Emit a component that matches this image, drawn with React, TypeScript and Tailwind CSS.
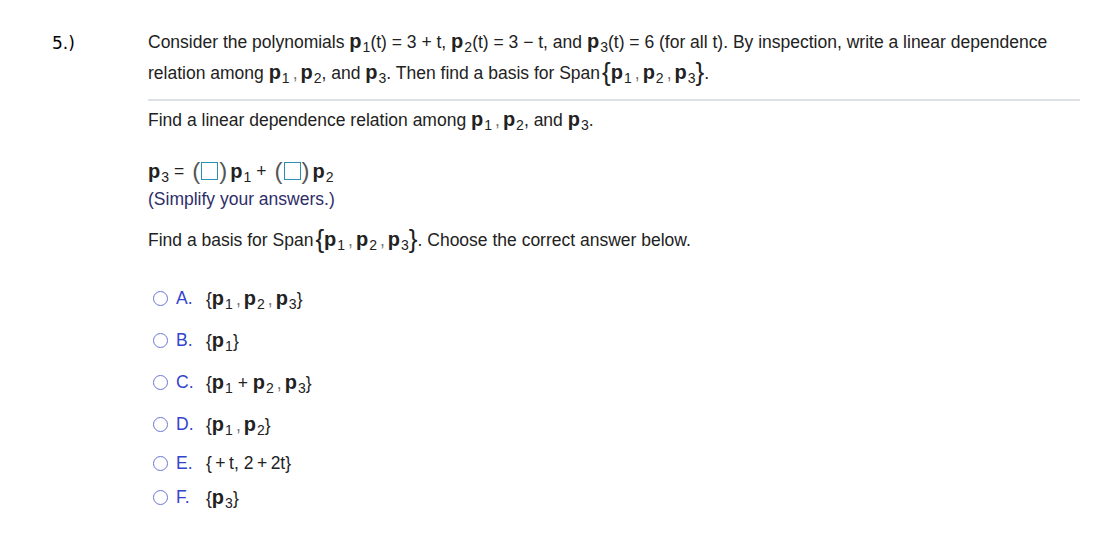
import React from "react";

const P: React.FC<{ n?: number }> = ({ n }) => (
  <span className="whitespace-nowrap">
    <b className="font-bold text-[20px]">p</b>
    {n !== undefined && <sub className="text-[14px] font-normal ml-[1px]">{n}</sub>}
  </span>
);

const Sep = () => <span className="text-[#777] mx-[3px]">,</span>;

const BigSet: React.FC<{ children: React.ReactNode }> = ({ children }) => (
  <span className="whitespace-nowrap">
    <span className="text-[26px] font-light leading-none relative top-[2px] ml-[2px]">{"{"}</span>
    {children}
    <span className="text-[26px] font-light leading-none relative top-[2px]">{"}"}</span>
  </span>
);

const Set: React.FC<{ children: React.ReactNode }> = ({ children }) => (
  <span className="whitespace-nowrap">
    <span className="font-light">{"{"}</span>
    {children}
    <span className="font-light">{"}"}</span>
  </span>
);

const Box = () => (
  <span className="inline-flex items-center mx-[3px]">
    <span className="text-[24px] font-light text-[#555] leading-none">(</span>
    <span className="inline-block w-[17px] h-[18px] mx-[1px] border border-[#2a8fb0] bg-white" />
    <span className="text-[24px] font-light text-[#555] leading-none">)</span>
  </span>
);

const options: { letter: string; body: React.ReactNode; mt: string }[] = [
  { letter: "A.", body: <Set><P n={1} /><Sep /><P n={2} /><Sep /><P n={3} /></Set>, mt: "mt-0" },
  { letter: "B.", body: <Set><P n={1} /></Set>, mt: "mt-[18px]" },
  { letter: "C.", body: <Set><P n={1} />{" + "}<P n={2} /><Sep /><P n={3} /></Set>, mt: "mt-[18px]" },
  { letter: "D.", body: <Set><P n={1} /><Sep /><P n={2} /></Set>, mt: "mt-[18px]" },
  { letter: "E.", body: <Set>{"\u2009+\u2009t, 2\u2009+\u20092t"}</Set>, mt: "mt-[15px]" },
  { letter: "F.", body: <Set><P n={3} /></Set>, mt: "mt-[10px]" },
];

export default function App() {
  return (
    <div className="w-[1095px] h-[557px] bg-white flex font-['Liberation_Sans',Arial,sans-serif] text-[17.5px] text-[#222]">
      <div className="w-[148px] pl-[52px] pt-[30px]">
        <span className="font-['DejaVu_Sans',sans-serif] text-[17px] text-black">5.)</span>
      </div>
      <div className="w-[932px] pt-[27px]">
        <p className="leading-[29px]">
          Consider the polynomials <P n={1} />
          {"(t) = 3 + t, "}
          <P n={2} />
          {"(t) = 3 − t, and "}
          <P n={3} />
          {"(t) = 6 (for all t). By inspection, write a linear dependence relation among "}
          <P n={1} />
          <Sep />
          <P n={2} />, and <P n={3} />. Then find a basis for Span
          <BigSet>
            <P n={1} />
            <Sep />
            <P n={2} />
            <Sep />
            <P n={3} />
          </BigSet>
          .
        </p>
        <div className="mt-[11px] h-[2px] bg-[#dde1e5]" />
        <p className="mt-[6px] leading-[24px]">
          Find a linear dependence relation among <P n={1} />
          <Sep />
          <P n={2} />, and <P n={3} />.
        </p>
        <div className="mt-[27px] flex items-center h-[24px]">
          <P n={3} />
          <span className="mx-[5px]">=</span>
          <Box />
          <P n={1} />
          <span className="mx-[5px]">+</span>
          <Box />
          <P n={2} />
        </div>
        <p className="mt-[5px] text-[#2e2e68] leading-[22px]">(Simplify your answers.)</p>
        <p className="mt-[14px] leading-[24px]">
          Find a basis for Span
          <BigSet>
            <P n={1} />
            <Sep />
            <P n={2} />
            <Sep />
            <P n={3} />
          </BigSet>
          . Choose the correct answer below.
        </p>
        <div className="mt-[34px] pl-[5px] flex flex-col">
          {options.map((o) => (
            <div key={o.letter} className={`flex items-center h-[24px] ${o.mt}`}>
              <span className="w-[15px] h-[15px] rounded-full border-[1.5px] border-[#6a78d8] inline-block" />
              <span className="ml-[8px] w-[30px] text-[#3344cc]">{o.letter}</span>
              <span>{o.body}</span>
            </div>
          ))}
        </div>
      </div>
    </div>
  );
}
